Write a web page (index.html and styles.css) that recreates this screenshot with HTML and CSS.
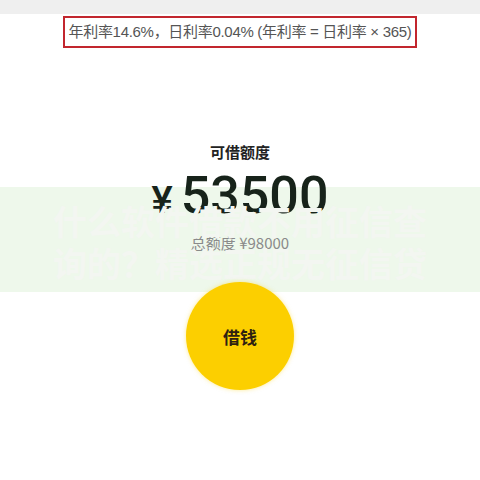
FILE: index.html
```
<!DOCTYPE html>
<html lang="zh">
<head>
<meta charset="utf-8">
<link rel="stylesheet" href="styles.css">
</head>
<body>
<div class="page">
  <div class="topbar"></div>
  <div class="rate-wrap">
    <div class="rate">年利率14.6%，日利率0.04% (年利率 = 日利率 × 365)</div>
  </div>
  <div class="band-bg"></div>
  <div class="title">可借额度</div>
  <div class="amount"><span class="yen">¥</span><span class="num">53500</span></div>
  <div class="total">总额度 ¥98000</div>
  <div class="band-text">什么软件借款不用征信查<br>询的？精选正规无征信贷</div>
  <div class="btn-wrap"><div class="btn">借钱</div></div>
</div>
</body>
</html>
```
FILE: styles.css
```
html, body {
  margin: 0;
  padding: 0;
  background: #ffffff;
}
.page {
  position: relative;
  width: 480px;
  height: 480px;
  overflow: hidden;
  font-family: "Noto Sans CJK SC", "Noto Sans", sans-serif;
  display: flex;
  flex-direction: column;
  align-items: center;
}
.topbar {
  width: 100%;
  height: 14px;
  background: #efefef;
}
.rate-wrap {
  margin-top: 2px;
}
.rate {
  box-sizing: border-box;
  width: 354px;
  height: 32px;
  border: 2px solid #c2262e;
  color: #555555;
  font-family: "Liberation Sans", "Noto Sans CJK SC", sans-serif;
  font-size: 15px;
  line-height: 28px;
  text-align: center;
  white-space: nowrap;
  letter-spacing: -0.3px;
}
.band-bg {
  position: absolute;
  left: 0;
  top: 187px;
  width: 480px;
  height: 105px;
  background: #eef8eb;
  z-index: 0;
}
.title {
  position: relative;
  z-index: 1;
  margin-top: 94px;
  font-size: 15px;
  line-height: 20px;
  font-weight: 700;
  color: #222222;
}
.amount {
  position: relative;
  z-index: 1;
  margin-top: 6px;
  height: 56px;
  display: flex;
  align-items: baseline;
  color: #17231a;
}
.yen {
  font-family: "Liberation Sans", sans-serif;
  font-weight: 700;
  font-size: 38px;
  margin-right: 8px;
}
.num {
  font-family: Roboto, sans-serif;
  font-weight: 500;
  font-size: 52px;
  line-height: 56px;
  letter-spacing: 0;
}
.total {
  position: relative;
  z-index: 1;
  margin-top: 9px;
  font-size: 15px;
  line-height: 20px;
  color: #8a8a8a;
}
.band-text {
  position: absolute;
  left: 0;
  top: 200px;
  width: 480px;
  text-align: center;
  font-size: 34px;
  line-height: 42px;
  font-weight: 700;
  color: #f3f6f1;
  z-index: 2;
}
.btn-wrap {
  position: relative;
  z-index: 3;
  margin-top: 29px;
}
.btn {
  width: 108px;
  height: 108px;
  border-radius: 50%;
  background: #fccf00;
  box-shadow: 0 0 4px rgba(252, 215, 40, 0.5);
  display: flex;
  align-items: center;
  justify-content: center;
  font-size: 17px;
  font-weight: 700;
  color: #2e2110;
}
```
